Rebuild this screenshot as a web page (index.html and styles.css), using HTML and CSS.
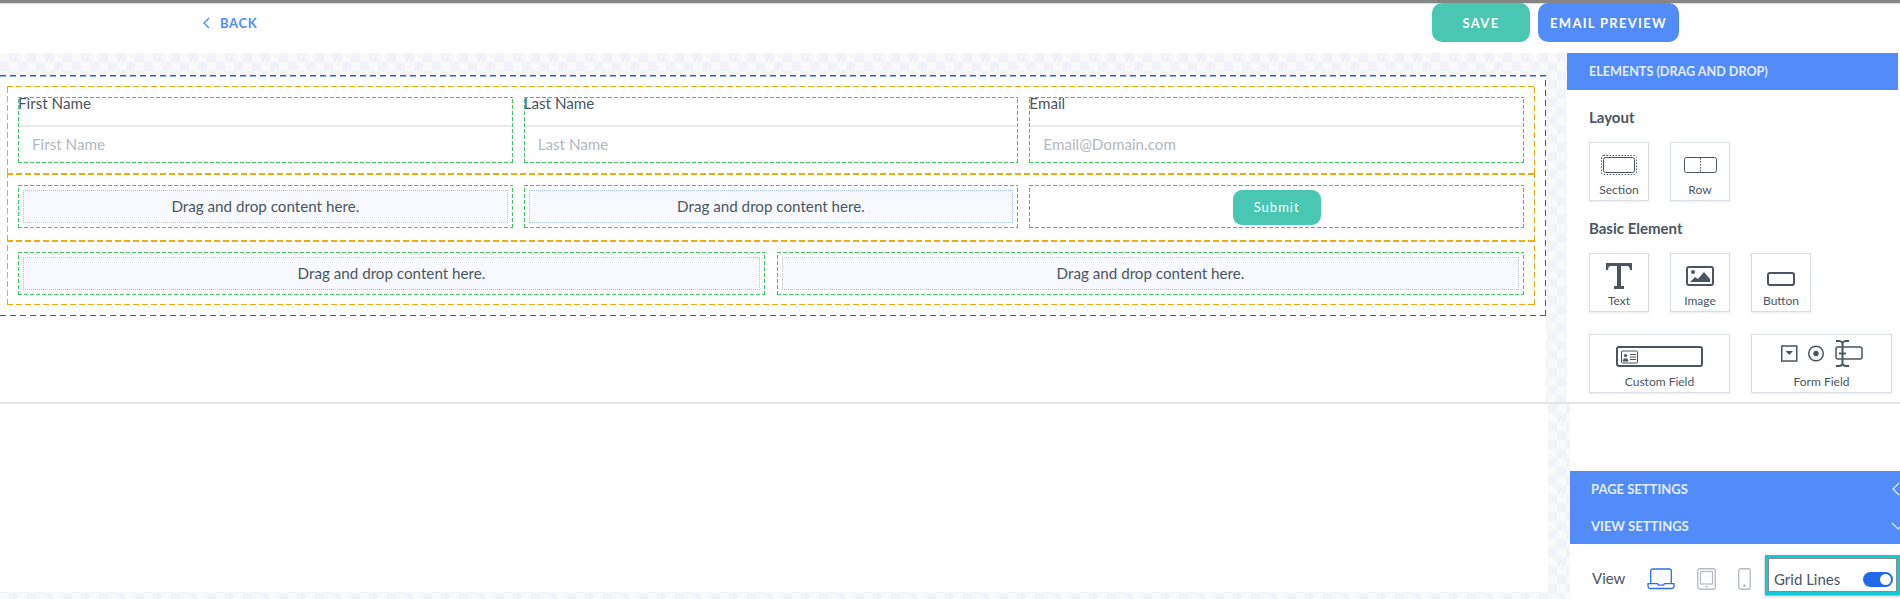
FILE: index.html
```html
<!DOCTYPE html>
<html lang="en">
<head>
  <meta charset="UTF-8" />
  <title>Form Builder</title>
  <link rel="stylesheet" href="styles.css">
</head>
<body>

<div id="header">
  <a class="back-link" href="#">
    <svg width="7" height="12" viewBox="0 0 7 12"><path d="M6 1 1 6l5 5" fill="none" stroke="#528cfb" stroke-width="1.4"/></svg>
    BACK
  </a>
  <div class="header-actions">
    <button class="head-btn save-btn">SAVE</button>
    <button class="head-btn preview-btn">EMAIL PREVIEW</button>
  </div>
</div>

<div id="workspace">
  <!-- upper part: form canvas and elements panel -->
  <div class="upper">
    <div class="stage">
      <div class="page-box">

        <div class="section section-fields">
          <div class="cols-3">
            <div class="field">
              <label class="field-label">First Name</label>
              <input class="field-input" placeholder="First Name">
            </div>
            <div class="field">
              <label class="field-label">Last Name</label>
              <input class="field-input" placeholder="Last Name">
            </div>
            <div class="field">
              <label class="field-label">Email</label>
              <input class="field-input" placeholder="Email@Domain.com">
            </div>
          </div>
        </div>

        <div class="section section-mid">
          <div class="cols-3">
            <div class="col"><div class="dropzone">Drag and drop content here.</div></div>
            <div class="col"><div class="dropzone">Drag and drop content here.</div></div>
            <div class="col col-center"><button class="submit-btn">Submit</button></div>
          </div>
        </div>

        <div class="section section-last">
          <div class="cols-2">
            <div class="col"><div class="dropzone">Drag and drop content here.</div></div>
            <div class="col"><div class="dropzone">Drag and drop content here.</div></div>
          </div>
        </div>

      </div>
    </div>

    <div class="panel">
      <div class="panel-head">ELEMENTS (DRAG AND DROP)</div>
      <div class="panel-body">
        <h4 class="group-title">Layout</h4>
        <div class="tiles">
          <div class="tile">
            <svg class="tile-icon" width="36" height="20" viewBox="0 0 36 20">
              <rect x=".5" y=".5" width="35" height="19" rx="2" fill="none" stroke="#4a5562" stroke-dasharray="1.5 1.5"/>
              <rect x="2.5" y="2.5" width="31" height="15" rx="2" fill="none" stroke="#4a5562"/>
            </svg>
            <span>Section</span>
          </div>
          <div class="tile">
            <svg class="tile-icon" width="33" height="20" viewBox="0 0 33 20">
              <rect x=".5" y="2.5" width="32" height="15" rx="2" fill="none" stroke="#4a5562"/>
              <path d="M16.5 3v14" stroke="#4a5562" stroke-dasharray="1.5 1.5"/>
            </svg>
            <span>Row</span>
          </div>
        </div>

        <h4 class="group-title group-basic">Basic Element</h4>
        <div class="tiles">
          <div class="tile">
            <svg class="tile-icon icon-t" width="28" height="28" viewBox="0 0 28 28">
              <path d="M1 1h26v7h-2c-.3-3-1-4-3-4h-6v20h3v3H9v-3h3V4H6c-2 0-2.700 1-3 4H1z" fill="#4a5562"/>
            </svg>
            <span>Text</span>
          </div>
          <div class="tile">
            <svg class="tile-icon" width="28" height="20" viewBox="0 0 28 20">
              <rect x="1" y="1" width="26" height="18" rx="2" fill="none" stroke="#4a5562" stroke-width="2"/>
              <circle cx="7" cy="6" r="2" fill="#4a5562"/>
              <path d="M4 16l5-5 3 2 6-7 6 7v3z" fill="#4a5562"/>
            </svg>
            <span>Image</span>
          </div>
          <div class="tile">
            <svg class="tile-icon" width="28" height="14" viewBox="0 0 28 14">
              <rect x="1" y="1" width="26" height="12" rx="2" fill="none" stroke="#4a5562" stroke-width="2"/>
            </svg>
            <span>Button</span>
          </div>
          <div class="tile tile-wide">
            <svg class="tile-icon" width="87" height="21" viewBox="0 0 87 21">
              <rect x="1" y="1" width="85" height="19" rx="2" fill="none" stroke="#4a5562" stroke-width="2"/>
              <rect x="5.500" y="5" width="16" height="12" rx="1" fill="none" stroke="#4a5562"/>
              <circle cx="9.500" cy="9.500" r="1.600" fill="#4a5562"/>
              <path d="M7 15c0-3 5-3 5 0zM14 8.500h6M14 11h6M14 13.500h6" fill="#4a5562" stroke="#4a5562"/>
            </svg>
            <span>Custom Field</span>
          </div>
          <div class="tile tile-wide">
            <svg class="tile-icon" width="82" height="27" viewBox="0 0 82 27">
              <rect x=".750" y="6" width="15" height="15" fill="none" stroke="#4a5562" stroke-width="1.500"/>
              <path d="M4.500 11h7.500l-3.750 4z" fill="#4a5562"/>
              <circle cx="35" cy="13.500" r="7.300" fill="none" stroke="#4a5562" stroke-width="1.500"/>
              <circle cx="35" cy="13.500" r="2.700" fill="#4a5562"/>
              <rect x="55" y="7" width="26" height="12" rx="2" fill="none" stroke="#4a5562" stroke-width="1.500"/>
              <path d="M55 1h3c2 0 3 1 3.500 2 .5-1 1.500-2 3.500-2h3M55 26h3c2 0 3-1 3.500-2 .5 1 1.500 2 3.500 2h3M61.500 3v21M58 13.500h7" fill="none" stroke="#4a5562" stroke-width="2"/>
            </svg>
            <span>Form Field</span>
          </div>
        </div>
      </div>
    </div>
  </div>

  <div class="divider"></div>

  <!-- lower part: settings -->
  <div class="lower">
    <div class="lower-blank"></div>
    <div class="settings">
      <div class="settings-spacer"></div>
      <div class="settings-head">
        <div class="settings-row">
          PAGE SETTINGS
          <svg class="chev" width="8" height="14" viewBox="0 0 8 14"><path d="M7 1 1 7l6 6" fill="none" stroke="#e4ecff" stroke-width="1.200"/></svg>
        </div>
        <div class="settings-row">
          VIEW SETTINGS
          <svg class="chev" width="9" height="8" viewBox="0 0 9 8"><path d="M1 1l6 6 6-6" fill="none" stroke="#e4ecff" stroke-width="1.200"/></svg>
        </div>
      </div>
      <div class="view-bar">
        <span class="view-label">View</span>
        <svg width="28" height="22" viewBox="0 0 28 22">
          <path d="M3.700 15.500V3a2 2 0 0 1 2-2h16.600a2 2 0 0 1 2 2v12.500" fill="none" stroke="#2f6fed" stroke-width="1.300"/>
          <path d="M1 15.700h9.500l1 1.500h5l1-1.500H27v2.300a2.500 2.500 0 0 1-2.500 2.500h-21A2.500 2.500 0 0 1 1 18z" fill="none" stroke="#2f6fed" stroke-width="1.300"/>
        </svg>
        <svg width="19" height="22" viewBox="0 0 19 22">
          <rect x=".750" y=".750" width="17.500" height="20.500" rx="2" fill="none" stroke="#b4bac3" stroke-width="1.300"/>
          <rect x="3.500" y="3.500" width="12" height="12.500" fill="none" stroke="#b4bac3" stroke-width="1.200"/>
          <circle cx="9.500" cy="18.600" r="1.100" fill="#b4bac3"/>
        </svg>
        <svg width="13" height="22" viewBox="0 0 13 22">
          <rect x=".750" y=".750" width="11.500" height="20.500" rx="2" fill="none" stroke="#b4bac3" stroke-width="1.300"/>
          <circle cx="6.500" cy="17.500" r="1.100" fill="#8f97a3"/>
        </svg>
        <div class="grid-toggle">
          <span>Grid Lines</span>
          <div class="switch"><div class="knob"></div></div>
        </div>
      </div>
    </div>
  </div>
</div>

</body>
</html>
```

FILE: styles.css
```css
* {
  box-sizing: border-box;
}

body {
  margin: 0;
  height: 599px;
  overflow: hidden;
  font-family: 'Lato', 'Open Sans', sans-serif;
  color: #4a5562;
  background: white;
}

/* Header */
#header {
  height: 53px;
  display: flex;
  justify-content: space-between;
  border-top: 3px solid #858585;
  box-shadow: inset 0 1px 0 #dddddd;
  padding: 0 221px 0 203px;
}

.back-link {
  display: flex;
  align-items: center;
  gap: 10px;
  height: 40px;
  color: #528cfb;
  font-size: 13px;
  font-weight: 700;
  letter-spacing: 0.7px;
  text-decoration: none;
}

.header-actions {
  display: flex;
  gap: 8px;
}

.head-btn {
  height: 39px;
  border: none;
  border-radius: 10px;
  color: white;
  font-family: inherit;
  font-size: 13px;
  font-weight: 700;
  letter-spacing: 1.3px;
  padding: 0;
}

.save-btn {
  width: 98px;
  background-color: #4ac7b2;
}

.preview-btn {
  width: 141px;
  background-color: #528cfb;
}

/* Workspace, checker shows through where nothing covers it */
#workspace {
  height: 546px;
  background-color: #f9f9f9;
  background-image: conic-gradient(#f1f3f9 25%, #f9f9f9 0 50%, #f1f3f9 0 75%, #f9f9f9 0);
  background-size: 18px 18px;
}

.upper {
  height: 349px;
  display: flex;
  justify-content: space-between;
}

.stage {
  width: 1546px;
  margin-top: 22px;
  background: white;
  overflow: hidden;
}

/* Grid lines: long dashes drawn on the four sides */
.page-box, .section, .col, .field {
  border: 1px solid transparent;
  background-origin: border-box;
  background-repeat: no-repeat;
  background-image:
    repeating-linear-gradient(90deg, var(--line) 0 var(--on), transparent 0 var(--step)),
    repeating-linear-gradient(90deg, var(--line) 0 var(--on), transparent 0 var(--step)),
    repeating-linear-gradient(0deg, var(--line) 0 var(--on), transparent 0 var(--step)),
    repeating-linear-gradient(0deg, var(--line) 0 var(--on), transparent 0 var(--step));
  background-position: top, bottom, left, right;
  background-size: 100% var(--size), 100% var(--size), var(--size) 100%, var(--size) 100%;
}

.page-box {
  --line: #1e5fe0;
  --on: 6px;
  --step: 10px;
  --size: 1.5px;
  margin-left: -10px;
  width: 1556px;
  height: 241px;
  padding: 10px 10px 0 16px;
}

.section {
  --line: #f5a90c;
  --on: 6px;
  --step: 9px;
  --size: 1px;
  padding: 10px 10px 0;
}

.section-fields {
  height: 88px;
}

.section-mid {
  height: 67px;
}

.section-last {
  height: 64px;
}

.cols-3 {
  display: grid;
  grid-template-columns: repeat(3, 1fr);
  gap: 11px;
}

.cols-2 {
  display: grid;
  grid-template-columns: repeat(2, 1fr);
  gap: 12px;
}

.col, .field {
  --line: #3cc864;
  --on: 4px;
  --step: 6px;
  --size: 1px;
}

.col {
  height: 43px;
  padding: 4px;
}

.col-center {
  display: flex;
  justify-content: center;
}

.field {
  height: 66px;
  display: flex;
  flex-direction: column;
  justify-content: space-between;
}

.field-label {
  font-size: 15.200px;
  line-height: 16px;
  margin: -3px 0 0 -1px;
}

.field-input {
  height: 38px;
  margin-bottom: -1px;
  border: none;
  border-top: 2px solid #e8e9ed;
  border-radius: 3px;
  padding: 0 0 3px 13px;
  font-family: inherit;
  font-size: 15.200px;
  background: transparent;
}

.field-input::placeholder {
  color: #b3b8c2;
}

.dropzone {
  height: 33px;
  display: flex;
  align-items: center;
  justify-content: center;
  padding-bottom: 2px;
  background-color: #f8f9ff;
  border: 1px dotted #a9c0f2;
  font-size: 15.200px;
}

.submit-btn {
  width: 88px;
  height: 35px;
  border: none;
  border-radius: 9px;
  padding: 0 0 2px;
  background-color: #4ac7b2;
  color: white;
  font-family: inherit;
  font-size: 13px;
  letter-spacing: 1px;
}

/* Elements panel */
.panel {
  width: 333px;
  background: white;
  padding-right: 2px;
}

.panel-head {
  height: 37px;
  display: flex;
  align-items: center;
  padding-left: 22px;
  background-color: #528cfb;
  color: #e4ecff;
  font-size: 12.600px;
  font-weight: 700;
}

.panel-body {
  padding: 18px 0 0 22px;
}

.group-title {
  margin: 0 0 16px;
  font-size: 15px;
  font-weight: 700;
  line-height: 18px;
}

.group-basic {
  margin-top: 18px;
}

.tiles {
  display: grid;
  grid-template-columns: repeat(3, 60px);
  grid-auto-rows: 59px;
  column-gap: 21px;
  row-gap: 22px;
}

.tile {
  display: flex;
  flex-direction: column;
  align-items: center;
  justify-content: flex-end;
  border: 1px solid #d9dee4;
  box-shadow: 0 1px 2px rgba(0,0,0,0.08);
  padding-bottom: 2px;
  font-size: 12px;
  line-height: 16px;
}

.tile-wide {
  grid-column: span 2;
}

.tile-wide:last-child {
  grid-column: 3 / span 2;
  width: 141px;
}

.tile-wide:nth-last-child(2) {
  grid-column: 1 / span 2;
}

.tile-icon {
  margin-bottom: 7px;
}

.icon-t {
  margin-bottom: 3px;
}

/* Divider between canvas and settings */
.divider {
  height: 2px;
  background-color: #e5e5e5;
}

.lower {
  height: 188px;
  display: flex;
  justify-content: space-between;
}

.lower-blank {
  width: 1548px;
  height: 188px;
  background: white;
}

.settings {
  width: 330px;
  height: 195px;
  background: white;
  overflow: hidden;
}

.settings-spacer {
  height: 67px;
}

.settings-head {
  background-color: #528cfb;
}

.settings-row {
  height: 36.500px;
  display: flex;
  align-items: center;
  justify-content: space-between;
  padding-left: 21px;
  color: #e4ecff;
  font-size: 13px;
  font-weight: 700;
}

.chev {
  flex: none;
}

.view-bar {
  display: flex;
  align-items: flex-start;
  gap: 22px;
  height: 55px;
  padding: 24px 0 0 22px;
}

.view-label {
  width: 33px;
  font-size: 15px;
  line-height: 21px;
}

.grid-toggle {
  flex: none;
  width: 135px;
  height: 40px;
  margin: -13px 0 0 -8px;
  display: flex;
  align-items: center;
  justify-content: space-between;
  border: 3px solid #14c9d6;
  box-shadow: inset 0 0 0 1px #8a8a8a, 0 1px 2px rgba(0,0,0,0.4);
  padding: 8px 4px 0 6px;
  font-size: 15px;
}

.switch {
  width: 30px;
  height: 15px;
  display: flex;
  justify-content: flex-end;
  align-items: center;
  padding-right: 2px;
  border-radius: 8px;
  background-color: #2468ea;
}

.knob {
  width: 11px;
  height: 11px;
  border-radius: 50%;
  background: white;
}
```
